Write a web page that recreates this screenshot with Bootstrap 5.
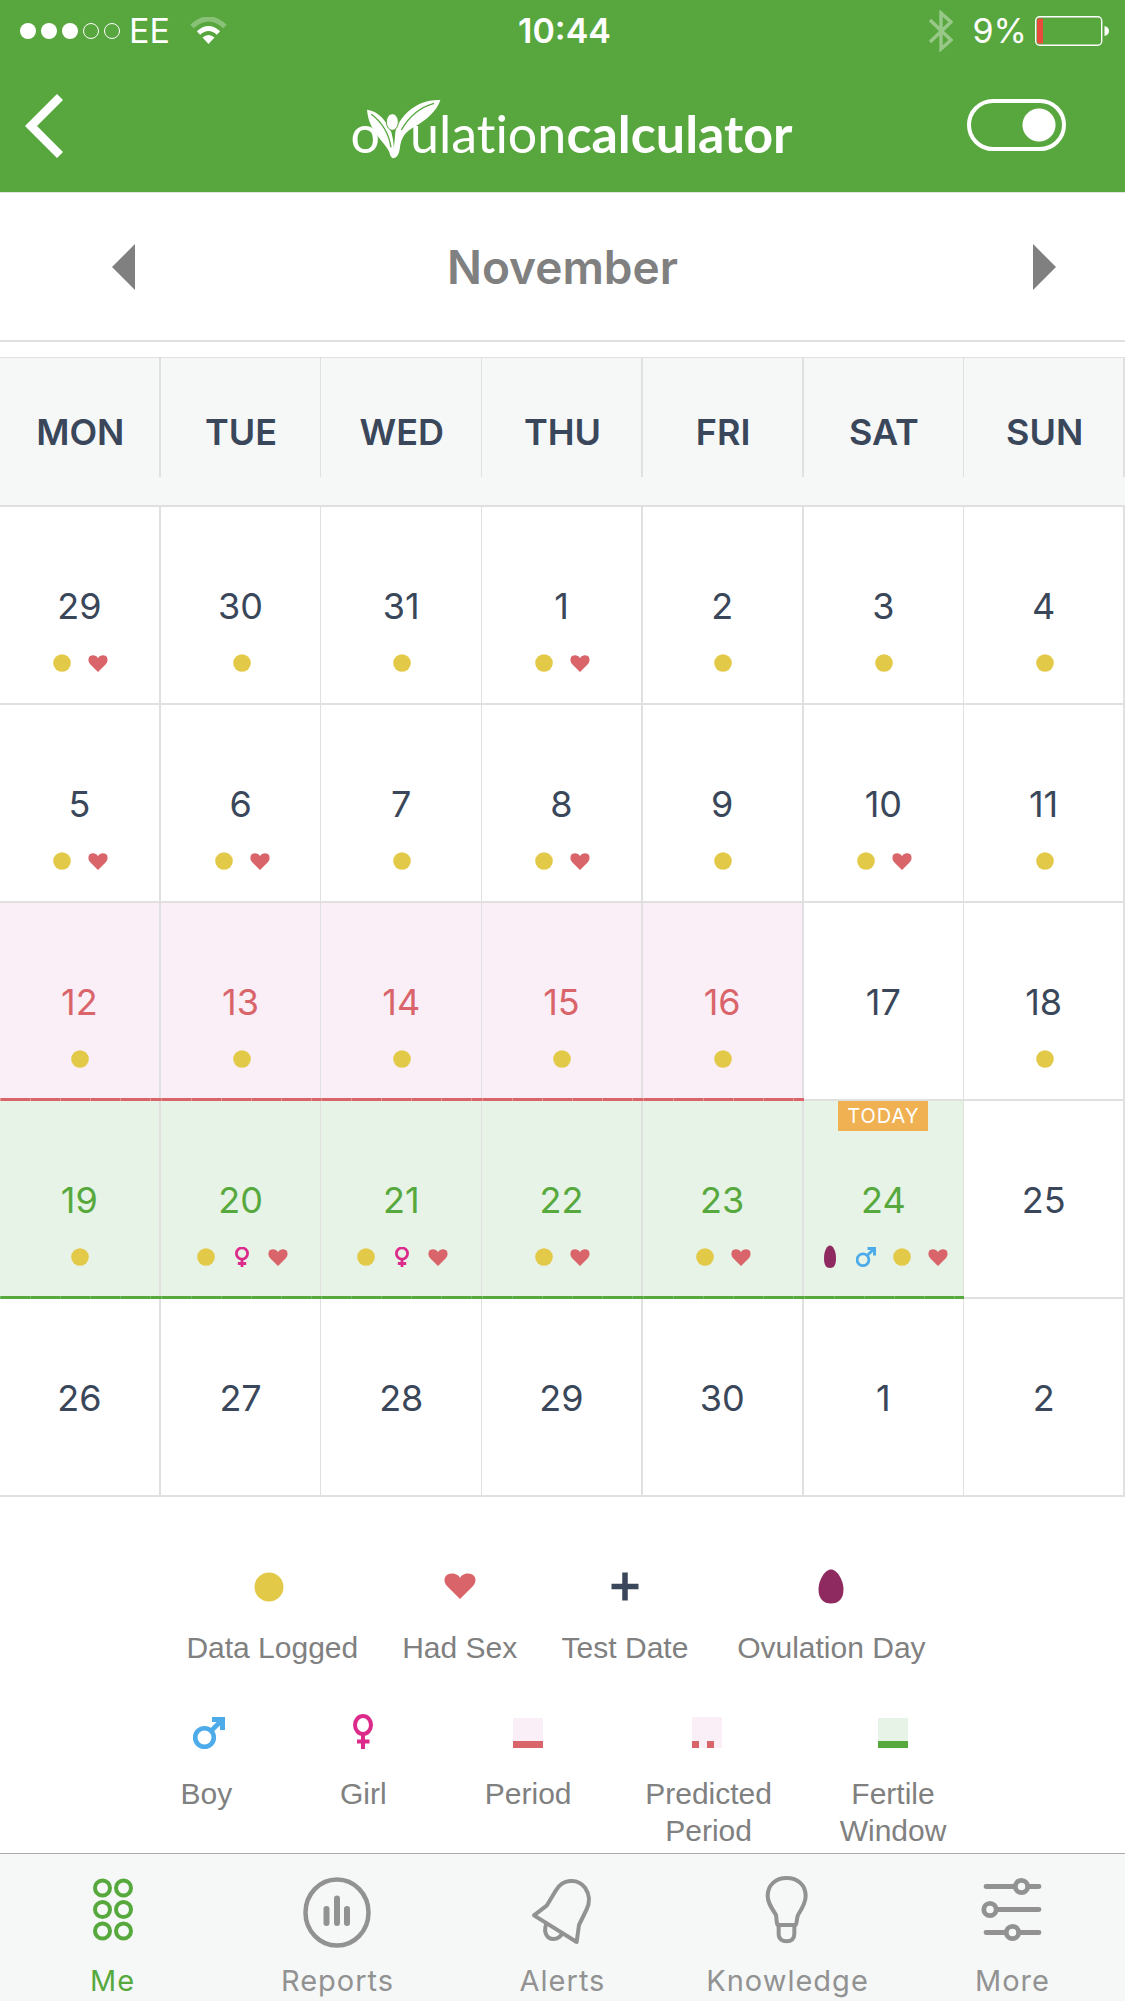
<!DOCTYPE html>
<html lang="en">
<head>
<meta charset="utf-8">
<meta name="viewport" content="width=device-width, initial-scale=1">
<title>Ovulation Calculator</title>
<link href="https://cdn.jsdelivr.net/npm/bootstrap@5.3.0/dist/css/bootstrap.min.css" rel="stylesheet">
<script src="https://cdn.jsdelivr.net/npm/bootstrap@5.3.0/dist/js/bootstrap.bundle.min.js"></script>
<style>
  :root { --leaf: #58a73e; --ink: #3a475a; --rose: #d9646a; --line: #e0e0e0; --soft: #f5f8f7; }
  body { font-family: Inter, "Liberation Sans", sans-serif; color: var(--ink); background: #fff; }
  .app-top { background: var(--leaf); color: #fff; border-bottom: 1px solid #dfe6dd; height: 193px; }
  .three-part { display: grid; grid-template-columns: 1fr auto 1fr; align-items: center; }
  .status-bar { height: 60px; padding: 2px 16px 0 20px; font-size: 34px; line-height: 58px; }
  .brand-bar { height: 132px; padding-left: 18px; }
  .brand-start { padding-left: 7px; }
  .brand-end { padding-right: 59px; }
  .back-btn svg { width: 38px; height: 64px; display: block; }
  .brand-name { font-family: Lato, "Liberation Sans", sans-serif; font-size: 52px; line-height: 60px; color: #fff; padding-top: 10px; font-variant-ligatures: none; }
  .brand-leaf { width: 74px; height: 60px; margin: 0 -31px 4px -13px; }
  .mode-switch.form-check-input { width: 99px; height: 52px; margin: 0 0 3px; border: 4px solid #fff; border-radius: 26px;
    background-color: transparent; background-size: auto; background-position: 0 0;
    background-image: radial-gradient(circle at 26px 50%, #fff 16px, transparent 17px); }
  .mode-switch.form-check-input:checked { background-color: transparent; border-color: #fff; background-position: 0 0;
    background-image: radial-gradient(circle at 68px 50%, #fff 16px, transparent 17px); }
  .month-bar { height: 149px; border-bottom: 2px solid var(--line); color: #808080; }
  .month-bar svg { width: 23px; height: 46px; display: block; }
  .month-start { padding-left: 112px; }
  .month-end { padding-right: 69px; }
  .month-title { font-size: 46px; font-weight: 600; line-height: 56px; margin: 0; }
  .cycle { table-layout: fixed; width: 100%; margin-top: 15px; border-collapse: separate; border-spacing: 0; text-align: center; }
  .cycle th { height: 150px; background: var(--soft); border-top: 1px solid var(--line); border-bottom: 2px solid var(--line);
    position: relative; padding: 0; font-size: 36px; font-weight: 600; line-height: 44px; }
  .cycle th::after { content: ""; position: absolute; right: 0; top: 0; height: 119px; width: 2px; background: var(--line); }
  .cycle td { height: 198px; border-right: 2px solid var(--line); border-bottom: 2px solid var(--line); position: relative;
    padding: 77px 0 0; vertical-align: top; font-size: 36px; line-height: 44px; }
  .cycle td:nth-child(2), .cycle td:nth-child(3), .cycle td:nth-child(6) { border-right-width: 1px; }
  .cycle th:nth-child(2)::after, .cycle th:nth-child(3)::after, .cycle th:nth-child(6)::after { width: 1px; }
  .signs { display: flex; justify-content: center; gap: 16px; margin-top: 25px; height: 20px; padding-left: 2px; }
  .signs svg { width: 20px; height: 20px; overflow: visible; }
  .cycle .bleed { background: #faeff7; color: var(--rose); }
  .cycle .fertile { background: #e7f3e6; color: #57a93e; }
  .bleed::after, .fertile::after { content: ""; position: absolute; left: 0; right: -2px; bottom: -2px; height: 3px; z-index: 1; }
  .bleed::after { background: repeating-linear-gradient(90deg, #e59095 0 1px, var(--rose) 1px 30px); }
  .fertile::after { background: repeating-linear-gradient(90deg, #78b965 0 1px, #57a93e 1px 30px); }
  .cycle td:nth-child(6)::after { right: -1px; }
  .today-tag { position: absolute; top: 0; left: 50%; transform: translateX(-50%); background: #efb152; color: #fff;
    width: 90px; font-size: 20px; line-height: 30px; letter-spacing: 1px; }
  .legend-grid { display: grid; font-family: "Liberation Sans", Arial, sans-serif; font-size: 30px; line-height: 37px; color: #808080; text-align: center; }
  .legend-a { grid-template-columns: 200fr 174fr 156fr 256fr; padding: 70px 14.7% 0 15.3%; }
  .legend-b { grid-template-columns: 156fr 157fr 172fr 188fr 180fr; padding: 47px 12.6% 0 11.4%; }
  .legend-grid svg { width: 40px; height: 40px; display: block; margin: 0 auto 22px; overflow: visible; }
  .tab-bar { background: var(--soft); border-top: 1px solid #a9acab; height: 148px; }
  .tab-bar a { flex: 1 1 0; text-align: center; text-decoration: none; color: #929292; font-size: 29px; line-height: 36px; letter-spacing: 1px; padding-top: 22px; }
  .tab-bar a.active { color: #57a93e; }
  .tab-bar svg { width: 72px; height: 72px; display: block; margin: 0 auto 15px; fill: none; stroke: currentColor; stroke-linecap: round; stroke-linejoin: round; }
</style>
</head>
<body class="d-flex flex-column min-vh-100">

<svg class="d-none" aria-hidden="true">
  <symbol id="dot" viewBox="0 0 20 20"><circle cx="10" cy="10" r="8.8" fill="#e3c948"/></symbol>
  <symbol id="heart" viewBox="0 0 20 20"><path d="M10 19 2.2 11.2C.2 9 0 6.200 1 4.200 2.500 1.600 8 1.300 10 5.200 12 1.300 17.500 1.600 19 4.200 20 6.200 19.800 9 17.800 11.200Z" fill="#d9646a"/></symbol>
  <symbol id="girl" viewBox="0 0 20 20"><g fill="none" stroke="#dd2b8c" stroke-width="2.800"><circle cx="10" cy="6.500" r="5.600"/><path d="M10 12v8.200M5.800 16.500h8.400"/></g></symbol>
  <symbol id="boy" viewBox="0 0 20 20"><g fill="none" stroke="#4eabe9" stroke-width="2.800"><circle cx="7" cy="12.800" r="5.900"/><path d="M11 8.800 17 2.800"/></g><path d="M11.500 0H20v8.500h-3V4.500L15.500 3h-4Z" fill="#4eabe9"/></symbol>
  <symbol id="egg" viewBox="0 0 20 20" overflow="visible"><path d="M10-1.500C13-1.500 16 4 16 11c0 7-2 10-6 10s-6-3-6-10C4 4 7-1.500 10-1.500Z" fill="#8f2a60"/></symbol>
</svg>

<header class="app-top">
  <div class="status-bar three-part">
    <div class="d-flex align-items-center">
      <svg width="101" height="20" viewBox="0 0 101 20" class="me-2" aria-hidden="true">
        <g fill="#fff"><circle cx="8" cy="10" r="8"/><circle cx="29" cy="10" r="8"/><circle cx="50" cy="10" r="8"/></g>
        <g fill="none" stroke="#fff"><circle cx="71" cy="10" r="7.500"/><circle cx="92" cy="10" r="7.500"/></g>
      </svg>
      <span class="me-1">EE</span>
      <svg width="37" height="28" viewBox="0 0 37 28" class="ms-3" aria-hidden="true">
        <path d="M2 9.500Q18.500-5.500 35 9.500" fill="none" stroke="#fff" stroke-width="5" opacity=".3"/>
        <path d="M8.500 16Q18.500 7 28.500 16" fill="none" stroke="#fff" stroke-width="5"/>
        <path d="M12.500 20.500Q18.500 15.500 24.500 20.500L18.500 27Z" fill="#fff"/>
      </svg>
    </div>
    <span class="fw-semibold">10:44</span>
    <div class="d-flex align-items-center justify-content-end">
      <svg width="24" height="42" viewBox="0 0 24 42" class="me-3" aria-hidden="true"><path d="M1 10 22 30 12 39V3L22 12 1 32" fill="none" stroke="#fff" stroke-width="3.400" opacity=".38"/></svg>
      <span class="ms-1 me-2">9%</span>
      <svg width="74" height="30" viewBox="0 0 74 30" aria-hidden="true"><rect x=".7" y=".7" width="66" height="28.500" rx="4" fill="none" stroke="#fff" stroke-width="1.400"/><path d="M4 2.500h4v25H4q-2 0-2-2v-21q0-2 2-2Z" fill="#ea4a3c"/><path d="M69.500 10q4.500 1 4.500 5t-4.500 5Z" fill="#fff"/></svg>
    </div>
  </div>
  <div class="brand-bar three-part">
    <div class="brand-start d-flex">
      <button type="button" class="btn p-0 border-0 back-btn" aria-label="Back"><svg viewBox="0 0 38 64"><path d="M35 3 6 32 35 61" fill="none" stroke="#fff" stroke-width="8.500"/></svg></button>
    </div>
    <h1 class="brand-name d-flex align-items-end m-0 fw-normal">
      <span>o</span>
      <svg class="brand-leaf" viewBox="105 50 222 180" aria-hidden="true">
        <path d="M105 82C140 86 165 118 178 150 185 175 187 200 186 228 178 228 175 222 172 210 162 180 110 150 105 82Z" fill="#fff"/>
        <path d="M325 53C250 50 200 105 190 150 188 175 186 200 180 226 194 232 202 215 204 195 207 165 222 148 245 135 285 112 315 85 325 53Z" fill="#fff"/>
        <path d="M118 96C150 120 170 150 177 195M306 63C262 75 228 108 208 143" fill="none" stroke="#58a73e" stroke-width="4"/>
        <ellipse cx="181" cy="119" rx="18" ry="25" fill="#fff" stroke="#58a73e" stroke-width="3"/>
      </svg>
      <span>ulation<b>calculator</b></span>
    </h1>
    <div class="brand-end d-flex justify-content-end">
      <input class="form-check-input mode-switch" type="checkbox" role="switch" aria-label="Mode" checked>
    </div>
  </div>
</header>

<main>
  <div class="month-bar three-part">
    <div class="month-start d-flex">
      <button type="button" class="btn p-0 border-0" aria-label="Previous month"><svg viewBox="0 0 23 46"><path d="M23 0v46L0 23Z" fill="#808080"/></svg></button>
    </div>
    <h2 class="month-title">November</h2>
    <div class="month-end d-flex justify-content-end">
      <button type="button" class="btn p-0 border-0" aria-label="Next month"><svg viewBox="0 0 23 46"><path d="M0 0v46l23-23Z" fill="#808080"/></svg></button>
    </div>
  </div>

  <table class="cycle">
    <thead><tr><th scope="col">MON</th><th scope="col">TUE</th><th scope="col">WED</th><th scope="col">THU</th><th scope="col">FRI</th><th scope="col">SAT</th><th scope="col">SUN</th></tr></thead>
    <tbody>
      <tr>
        <td>29<div class="signs"><svg><use href="#dot"/></svg><svg><use href="#heart"/></svg></div></td>
        <td>30<div class="signs"><svg><use href="#dot"/></svg></div></td>
        <td>31<div class="signs"><svg><use href="#dot"/></svg></div></td>
        <td>1<div class="signs"><svg><use href="#dot"/></svg><svg><use href="#heart"/></svg></div></td>
        <td>2<div class="signs"><svg><use href="#dot"/></svg></div></td>
        <td>3<div class="signs"><svg><use href="#dot"/></svg></div></td>
        <td>4<div class="signs"><svg><use href="#dot"/></svg></div></td>
      </tr>
      <tr>
        <td>5<div class="signs"><svg><use href="#dot"/></svg><svg><use href="#heart"/></svg></div></td>
        <td>6<div class="signs"><svg><use href="#dot"/></svg><svg><use href="#heart"/></svg></div></td>
        <td>7<div class="signs"><svg><use href="#dot"/></svg></div></td>
        <td>8<div class="signs"><svg><use href="#dot"/></svg><svg><use href="#heart"/></svg></div></td>
        <td>9<div class="signs"><svg><use href="#dot"/></svg></div></td>
        <td>10<div class="signs"><svg><use href="#dot"/></svg><svg><use href="#heart"/></svg></div></td>
        <td>11<div class="signs"><svg><use href="#dot"/></svg></div></td>
      </tr>
      <tr>
        <td class="bleed">12<div class="signs"><svg><use href="#dot"/></svg></div></td>
        <td class="bleed">13<div class="signs"><svg><use href="#dot"/></svg></div></td>
        <td class="bleed">14<div class="signs"><svg><use href="#dot"/></svg></div></td>
        <td class="bleed">15<div class="signs"><svg><use href="#dot"/></svg></div></td>
        <td class="bleed">16<div class="signs"><svg><use href="#dot"/></svg></div></td>
        <td>17</td>
        <td>18<div class="signs"><svg><use href="#dot"/></svg></div></td>
      </tr>
      <tr>
        <td class="fertile">19<div class="signs"><svg><use href="#dot"/></svg></div></td>
        <td class="fertile">20<div class="signs"><svg><use href="#dot"/></svg><svg><use href="#girl"/></svg><svg><use href="#heart"/></svg></div></td>
        <td class="fertile">21<div class="signs"><svg><use href="#dot"/></svg><svg><use href="#girl"/></svg><svg><use href="#heart"/></svg></div></td>
        <td class="fertile">22<div class="signs"><svg><use href="#dot"/></svg><svg><use href="#heart"/></svg></div></td>
        <td class="fertile">23<div class="signs"><svg><use href="#dot"/></svg><svg><use href="#heart"/></svg></div></td>
        <td class="fertile"><span class="today-tag">TODAY</span>24<div class="signs"><svg><use href="#egg"/></svg><svg><use href="#boy"/></svg><svg><use href="#dot"/></svg><svg><use href="#heart"/></svg></div></td>
        <td>25</td>
      </tr>
      <tr><td>26</td><td>27</td><td>28</td><td>29</td><td>30</td><td>1</td><td>2</td></tr>
    </tbody>
  </table>

  <div class="legend-grid legend-a">
    <div><svg viewBox="0 0 40 40"><circle cx="17" cy="20" r="14.500" fill="#e3c948"/></svg>Data Logged</div>
    <div><svg viewBox="0 0 40 40"><path d="M20 32 7 19C4 15.500 4 12 5.500 9.500 8 5 18 5.500 20 11 22 5.500 32 5 34.500 9.500 36 12 36 15.500 33 19Z" fill="#d9646a"/></svg>Had Sex</div>
    <div><svg viewBox="0 0 40 40"><path d="M20 5.500v28M6.500 19.500h27" stroke="#3a475a" stroke-width="5.500" fill="none"/></svg>Test Date</div>
    <div><svg viewBox="0 0 40 40"><path d="M20 2.500C26 2.500 32.500 13 32.500 22.500 32.500 32 27.500 36.500 20 36.500S7.500 32 7.500 22.500C7.500 13 14 2.500 20 2.500Z" fill="#8f2a60"/></svg>Ovulation Day</div>
  </div>
  <div class="legend-grid legend-b">
    <div><svg viewBox="0 0 40 40"><circle cx="18.500" cy="24.500" r="9.300" fill="none" stroke="#4eabe9" stroke-width="4.600"/><path d="M25 18 35 8" stroke="#4eabe9" stroke-width="4.600"/><path d="M26 4H39V17H34V12L31 9H26Z" fill="#4eabe9"/></svg>Boy</div>
    <div><svg viewBox="0 0 40 40"><g fill="none" stroke="#dd2b8c" stroke-width="4"><ellipse cx="20" cy="12" rx="8" ry="9"/><path d="M20 21v15M14 28.500h12.500"/></g></svg>Girl</div>
    <div><svg viewBox="0 0 40 40"><path d="M5 5h30v23H5Z" fill="#faeff7"/><path d="M5 28h30v7H5Z" fill="#d9646a"/></svg>Period</div>
    <div><svg viewBox="0 0 40 40"><path d="M3 4h30v31H3Z" fill="#faeff7"/><path d="M3 28h7v7H3ZM18 28h7v7H18Z" fill="#d9646a"/></svg>Predicted<br>Period</div>
    <div><svg viewBox="0 0 40 40"><path d="M5 5h30v23H5Z" fill="#e7f3e6"/><path d="M5 28h30v7H5Z" fill="#57a93e"/></svg>Fertile<br>Window</div>
  </div>
</main>

<nav class="tab-bar d-flex mt-auto" aria-label="Main">
  <a href="#me" class="active" aria-current="page"><svg viewBox="0 0 72 72" stroke-width="4"><circle cx="25.500" cy="12" r="7.500"/><circle cx="46.500" cy="12" r="7.500"/><circle cx="25.500" cy="33.500" r="7.500"/><circle cx="46.500" cy="33.500" r="7.500"/><circle cx="25.500" cy="55" r="7.500"/><circle cx="46.500" cy="55" r="7.500"/></svg>Me</a>
  <a href="#reports"><svg viewBox="0 0 72 72" stroke-width="4.500"><ellipse cx="35" cy="36.500" rx="31.500" ry="33"/><path d="M24.500 33V47M35 22.500V47M45 33V47" stroke-width="6"/></svg>Reports</a>
  <a href="#alerts"><svg viewBox="19 33 216 216" stroke-width="12"><path d="M78 122 105 77C125 42 170 38 193 68 206 87 209 112 197 135L175 180 168 231 40 151Z"/><path d="M76 179C68 205 80 222 98 222 112 221 121 213 125 205"/></svg>Alerts</a>
  <a href="#knowledge"><svg viewBox="694 33 216 216" stroke-width="12"><path d="M771 180C767 175 768 160 766 150 752 128 741 112 741 93 741 60 765 39 798 39S855 60 855 93C855 112 846 128 832 150 828 160 829 175 825 180Z"/><path d="M774 182V207C774 221 784 229 798 229S821 221 821 207V182"/></svg>Knowledge</a>
  <a href="#more"><svg viewBox="0 0 72 72" stroke-width="4.800"><path d="M9 10.500H37M51 10.500H62M20 33.500H62M9 56.500H28M42 56.500H62"/><circle cx="44.500" cy="10.500" r="6.200"/><circle cx="13" cy="33.500" r="6.200"/><circle cx="35.500" cy="56.500" r="6.200"/></svg>More</a>
</nav>
</body>
</html>
